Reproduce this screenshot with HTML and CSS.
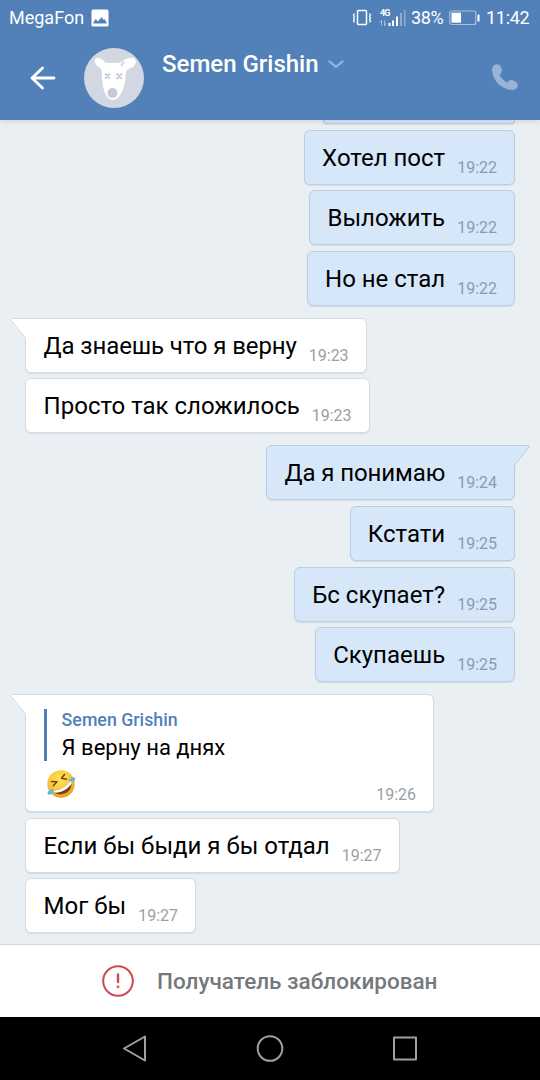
FILE: index.html
```html
<!DOCTYPE html>
<html lang="ru">
<head>
  <meta charset="UTF-8">
  <title>Semen Grishin</title>
  <meta name="viewport" content="width=device-width, initial-scale=1.0">
  <link rel="stylesheet" href="styles.css">
</head>
<body>

  <header class="top">
    <div class="status">
      <span class="carrier">MegaFon</span>
      <svg class="pic" width="18" height="18" viewBox="0 0 18 18"><rect x="0.5" y="0.5" width="17" height="17" rx="1.5" fill="#fff"/><path d="M2.500 14.500V13l2.300-3 2 2.500L10.800 8l1.500 3 1-1 2.200 3v1.500z" fill="#5181b8"/></svg>
      <svg class="vibro" width="20" height="18" viewBox="0 0 20 18" fill="none" stroke="#fff"><rect x="5.500" y="1.500" width="9" height="14" rx="1" stroke-width="1.500"/><path d="M2.500 4.500l-1 1.500 1 1.500-1 1.500 1 1.500-1 1.500 1 1.500M17.500 4.500l1 1.500-1 1.500 1 1.500-1 1.500 1 1.500-1 1.500" stroke-width="1.300"/></svg>
      <div class="signal">
        <span class="net">4G</span>
        <svg width="28" height="18" viewBox="0 0 28 18"><g fill="#fff"><path d="M9.500 14h2v3h-2zM13 11.500h2V17h-2zM17 7.500h2V17h-2z"/><path d="M21 4h2v13h-2zM25 1h1.500v16H25z" opacity=".35"/></g><path d="M2.500 16.500v-5l-1.500 2M5.500 11.500v5l1.500-2" fill="none" stroke="#fff" opacity=".5"/></svg>
      </div>
      <span class="percent">38%</span>
      <svg class="battery" width="31" height="16" viewBox="0 0 31 16"><rect x="0.800" y="1" width="26" height="13.500" rx="2" fill="none" stroke="#a9c1de" stroke-width="1.200"/><rect x="2.500" y="2.700" width="9.500" height="10" fill="#fff"/><path d="M28.500 4.500h2v7h-2z" fill="#fff"/></svg>
      <span class="clock">11:42</span>
    </div>

    <div class="bar">
      <svg class="back" width="26" height="24" viewBox="0 0 26 24" fill="none" stroke="#fff" stroke-width="2.800" stroke-linecap="round" stroke-linejoin="round"><path d="M24 12H2.500M12.500 2L2 12l10.500 10"/></svg>
      <svg class="avatar" width="60" height="60" viewBox="0 0 60 60">
        <circle cx="30" cy="30" r="30" fill="#d2d8e1"/>
        <path d="M21 14.500C19 11 15.500 9.500 12.800 10.200 9.500 11 10.500 15 13.500 18c2 2 3.500 2 4 4 .5 4 .2 9 1.300 15 1 7 4 14 9.700 15 6 0 9.500-7 11.500-14 1.500-5 1.300-9 2-14 .5-2.500 2.500-2.700 5-4 4-2 6-5.500 4.300-8.500-1.500-2.500-7-2.200-11 .5-1.300.8-2 2-3.300 2.500-4.500.8-10 .8-16 0z" fill="#fff"/>
        <circle cx="28.500" cy="45" r="5" fill="#c4cbd5"/>
        <path d="M21 25.500l5 5m0-5l-5 5M32.500 25.500l5.500 5.500m0-5.500L32.500 31" stroke="#c9d0da" stroke-width="2"/>
        <path d="M41 14.500l-2.500.5-.5 3M38 16l-1 2.500" stroke="#c9d0da" stroke-width="1.200" fill="none"/>
      </svg>
      <h1 class="name">Semen Grishin</h1>
      <svg class="chevron" width="16" height="9" viewBox="0 0 16 9" fill="none" stroke="#99b5d6" stroke-width="2.200" stroke-linecap="round" stroke-linejoin="round"><path d="M1.500 1.500L8 7l6.500-5.500"/></svg>
      <svg class="phone" width="26" height="26" viewBox="0 0 26 26"><path d="M4.500.2C1.500.2.100 3 .100 6.200.500 16.500 9.500 25.500 19.800 25.900c3.500 0 6-1.500 6-4.700 0-2-1-3-3-4-2.300-1.100-4.300-1.600-5.800-.4l-1.800 1.700C12.500 17.200 9 13.700 7.500 10.900L9.200 9c1.200-1.500.9-3.500-.1-5.700C8.100 1.200 6.900.2 4.500.2z" fill="#98b4d5"/></svg>
    </div>
  </header>

  <main class="chat">
    <div class="msg out cut"></div>
    <div class="msg out"><p>Хотел пост</p><time>19:22</time></div>
    <div class="msg out"><p>Выложить</p><time>19:22</time></div>
    <div class="msg out"><p>Но не стал</p><time>19:22</time></div>

    <div class="msg in first">
      <svg class="tail" width="18" height="22" viewBox="0 0 18 22"><path d="M18 .5H2.500Q1.300.700 2 2L14.500 17.500Q16.500 19.500 16.500 22H18z" fill="#fff"/><path d="M18 .5H2.500Q1.300.700 2 2L14.500 17.500Q16.500 19.500 16.500 22" fill="none" stroke="#d5dbe2"/></svg>
      <p class="tight">Да знаешь что я верну</p><time>19:23</time>
    </div>
    <div class="msg in"><p>Просто так сложилось</p><time>19:23</time></div>

    <div class="msg out first">
      <svg class="tail" width="18" height="22" viewBox="0 0 18 22"><path d="M0 .5h15.500q1.200.2.500 1.500L3.500 17.500Q1.500 19.500 1.500 22H0z" fill="#d6e7f9"/><path d="M0 .5h15.500q1.200.2.500 1.500L3.500 17.500Q1.500 19.500 1.500 22" fill="none" stroke="#b9cde6"/></svg>
      <p class="tight">Да я понимаю</p><time>19:24</time>
    </div>
    <div class="msg out"><p>Кстати</p><time>19:25</time></div>
    <div class="msg out"><p>Бс скупает?</p><time>19:25</time></div>
    <div class="msg out"><p>Скупаешь</p><time>19:25</time></div>

    <div class="msg in first reply">
      <svg class="tail" width="18" height="22" viewBox="0 0 18 22"><path d="M18 .5H2.500Q1.300.700 2 2L14.500 17.500Q16.500 19.500 16.500 22H18z" fill="#fff"/><path d="M18 .5H2.500Q1.300.700 2 2L14.500 17.500Q16.500 19.500 16.500 22" fill="none" stroke="#d5dbe2"/></svg>
      <div class="body">
        <blockquote class="quote">
          <span class="author">Semen Grishin</span>
          <span class="text">Я верну на днях</span>
        </blockquote>
        <svg class="emoji" width="30" height="30" viewBox="0 0 30 30">
          <defs><radialGradient id="face" cx=".45" cy=".35" r=".65"><stop offset="0" stop-color="#ffe55c"/><stop offset=".6" stop-color="#fbc93a"/><stop offset="1" stop-color="#e99a25"/></radialGradient></defs>
          <circle cx="15" cy="15" r="13.700" fill="url(#face)"/>
          <path d="M6.500 21.500C13 22 21 17.500 25 11c2 5-.5 11-5.500 13.300-5 2.200-10.500 1.200-13-2.800z" fill="#7d3f16"/>
          <path d="M6.500 21.500C13 22 21 17.500 25 11c.5 1.300.7 2.500.6 3.800C21.500 20.500 14.500 24.200 8.300 23.600z" fill="#fff"/>
          <path d="M5.500 12.500l5.500.2-3.700 4M18.500 5.500l-3 3.800 5 .9" fill="none" stroke="#6d4316" stroke-width="1.500" stroke-linecap="round" stroke-linejoin="round"/>
          <path d="M8.500 20.500c-2.500-.5-5.500.5-6.700 2.500-.8 2 .7 3.300 2.600 2.600 1.800-.7 2.800-3 4.100-5.100zM22.500 12c.7-2 2.500-3.700 4.700-3.800 2 .1 2.600 2 1.300 3.200-1.300 1.100-3.500.8-6 .6z" fill="#58b9e3"/>
        </svg>
      </div>
      <time>19:26</time>
    </div>
    <div class="msg in"><p>Если бы быди я бы отдал</p><time>19:27</time></div>
    <div class="msg in"><p>Мог бы</p><time>19:27</time></div>
  </main>

  <footer class="blocked">
    <svg width="32" height="32" viewBox="0 0 32 32" fill="none" stroke="#cf4a4e" stroke-width="2" stroke-linecap="round"><circle cx="16" cy="16" r="14.800"/><path d="M16 9.500v7.500" stroke-width="2.400"/><circle cx="16" cy="21.800" r=".5"/></svg>
    <span>Получатель заблокирован</span>
  </footer>

  <nav class="nav">
    <svg width="26" height="30" viewBox="0 0 26 30" fill="none" stroke="#a0a0a0" stroke-width="2" stroke-linejoin="round"><path d="M23 2.500v24L2 14.500z"/></svg>
    <svg width="28" height="28" viewBox="0 0 28 28" fill="none" stroke="#a0a0a0" stroke-width="2"><circle cx="14" cy="13.500" r="12.300"/></svg>
    <svg width="26" height="26" viewBox="0 0 26 26" fill="none" stroke="#a0a0a0" stroke-width="2" stroke-linejoin="round"><rect x="2" y="1.500" width="22" height="22"/></svg>
  </nav>

</body>
</html>
```
FILE: styles.css
```css
* {
  box-sizing: border-box;
}

body {
  margin: 0;
  width: 540px;
  height: 1080px;
  display: flex;
  flex-direction: column;
  overflow: hidden;
  background: #eaeff3;
  font-family: Roboto, "Noto Sans", sans-serif;
  color: #000;
}

svg {
  display: block;
  flex: none;
}

p, h1, blockquote {
  margin: 0;
}

/* header */
.top {
  position: relative;
  z-index: 2;
  flex: none;
  height: 120px;
  background: #5181b8;
  color: #fff;
  box-shadow: 0 1px 6px rgba(0, 0, 0, 0.12);
}

.status {
  display: flex;
  align-items: center;
  height: 36px;
  padding: 0 11px 0 9px;
  font-size: 18px;
  line-height: 36px;
  white-space: nowrap;
}

.carrier {
  width: 82px;
}

.vibro {
  margin-left: auto;
}

.signal {
  position: relative;
  width: 28px;
  margin: 0 4px 0 7px;
}

.net {
  position: absolute;
  left: 1px;
  top: 0;
  font-size: 9px;
  line-height: 9px;
  font-weight: 700;
  letter-spacing: -0.8px;
}

.percent {
  width: 33px;
  letter-spacing: -0.4px;
}

.battery {
  margin: 0 6px 0 5px;
}

.clock {
  width: 43px;
  letter-spacing: -0.3px;
}

.bar {
  display: flex;
  align-items: center;
  height: 84px;
  padding: 0 22px 0 30px;
}

.avatar {
  margin-left: 28px;
}

.name {
  margin: 0 9px 29px 18px;
  font-size: 24px;
  line-height: 28px;
  font-weight: 500;
  white-space: nowrap;
}

.chevron {
  margin-bottom: 27px;
}

.phone {
  margin-left: auto;
  margin-bottom: 2px;
}

/* messages */
.chat {
  flex: 1;
  min-height: 0;
  display: flex;
  flex-direction: column;
  gap: 5.7px;
  padding: 0 25px;
}

.msg {
  position: relative;
  flex: none;
  display: flex;
  align-items: flex-end;
  gap: 12px;
  height: 55px;
  padding: 0 17px;
  border: 1px solid #d5dbe2;
  border-radius: 6px;
  box-shadow: 0 1px 1px rgba(60, 80, 110, 0.12);
  white-space: nowrap;
}

.msg p {
  font-size: 24px;
  line-height: 28px;
  margin-bottom: 12px;
}

.msg .tight {
  letter-spacing: -0.1px;
}

.msg time {
  font-size: 16px;
  line-height: 18px;
  margin-bottom: 7px;
  color: #9a9fa5;
}

.in {
  align-self: flex-start;
  padding-left: 17.6px;
  background: #fff;
}

.out {
  align-self: flex-end;
  background: #d6e7f9;
  border-color: #b9cde6;
}

.out time {
  color: #8b9bae;
}

.cut {
  width: 192px;
  height: 4px;
  border-top: 0;
  border-radius: 0 0 6px 6px;
}

.first {
  margin-top: 6px;
}

.in.first {
  border-top-left-radius: 0;
}

.out.first {
  border-top-right-radius: 0;
}

.tail {
  position: absolute;
  top: -1px;
}

.in .tail {
  left: -17px;
}

.out .tail {
  right: -17px;
}

.reply {
  width: 409px;
  height: 118px;
  justify-content: space-between;
}

.body {
  align-self: flex-start;
  padding-top: 14px;
}

.quote {
  display: flex;
  flex-direction: column;
  height: 52px;
  padding-left: 15px;
  border-left: 3px solid #5181b8;
}

.author {
  font-size: 17.8px;
  line-height: 21px;
  font-weight: 500;
  color: #5181b8;
}

.text {
  margin-top: 5px;
  font-size: 22px;
  line-height: 26px;
}

.emoji {
  margin: 8px 0 0 2.4px;
}

/* bottom */
.blocked {
  flex: none;
  display: flex;
  align-items: center;
  gap: 23px;
  height: 73px;
  padding-left: 102px;
  background: #fff;
  border-top: 1px solid #d3d8de;
  font-size: 22.5px;
  font-weight: 500;
  color: #76787a;
  white-space: nowrap;
}

.nav {
  flex: none;
  display: flex;
  align-items: center;
  justify-content: space-between;
  height: 63px;
  padding: 0 122px;
  background: #000;
}
```
